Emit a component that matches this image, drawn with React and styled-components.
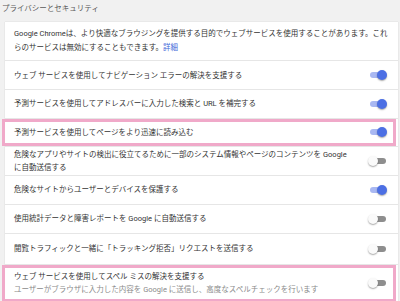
import React from 'react';
import styled, { createGlobalStyle } from 'styled-components';

const GlobalStyle = createGlobalStyle`
  html, body {
    margin: 0;
    padding: 0;
    background: #f1f1f1;
    font-family: Roboto, "Noto Sans CJK JP", sans-serif;
    overflow: hidden;
  }
`;

const Page = styled.div`
  width: 400px;
  height: 301px;
  overflow: hidden;
`;

const Heading = styled.h2`
  margin: 0;
  padding: 3px 2px 0;
  height: 19px;
  font-size: 7.5px;
  line-height: 11px;
  font-weight: 400;
  color: #5a5a5a;
`;

const Card = styled.div`
  margin: 0 2px 0 5px;
  background: #fff;
  box-shadow: 0 0 1px rgba(0, 0, 0, 0.2);
`;

const Intro = styled.p`
  margin: 0;
  padding: 5px 10px 5px 9px;
  font-size: 7.5px;
  line-height: 14px;
  color: #333;
  border-bottom: 1px solid #e6e6e6;
`;

const Link = styled.a`
  color: #3f67d8;
  text-decoration: none;
`;

const Row = styled.div`
  position: relative;
  display: flex;
  align-items: center;
  justify-content: space-between;
  min-height: ${(p) => p.$height || 28.5}px;
  padding: 0 11px 0 9px;
  box-sizing: border-box;
  border-bottom: 1px solid #e6e6e6;

  ${(p) =>
    p.$highlight &&
    `
    &::after {
      content: '';
      position: absolute;
      top: 0;
      bottom: 0;
      left: -3px;
      right: 2px;
      border: 3px solid #f0a9c9;
      pointer-events: none;
    }
  `}
`;

const Label = styled.div`
  max-width: 345px;
  font-size: 7.5px;
  line-height: 13px;
  color: #333;
  word-break: keep-all;
`;

const Sub = styled.div`
  color: #8a8a8a;
`;

const Switch = styled.div`
  position: relative;
  flex: none;
  width: 18px;
  height: 10px;
`;

const Track = styled.div`
  position: absolute;
  left: 1px;
  right: 1px;
  top: 2px;
  height: 6px;
  border-radius: 3px;
  background: ${(p) => (p.$on ? '#a9b8f2' : '#8e8e8e')};
`;

const Knob = styled.div`
  position: absolute;
  top: 0;
  left: ${(p) => (p.$on ? '8px' : '-1px')};
  width: 10px;
  height: 10px;
  border-radius: 50%;
  background: ${(p) => (p.$on ? '#4c6fe4' : '#fafafa')};
  box-shadow: 0 1px 1.5px rgba(0, 0, 0, 0.35);
`;

function Toggle({ on }) {
  return (
    <Switch>
      <Track $on={on} />
      <Knob $on={on} />
    </Switch>
  );
}

const rows = [
  { text: 'ウェブ サービスを使用してナビゲーション エラーの解決を支援する', on: true, height: 29 },
  { text: '予測サービスを使用してアドレスバーに入力した検索と URL を補完する', on: true },
  { text: '予測サービスを使用してページをより迅速に読み込む', on: true, highlight: true },
  {
    text: '危険なアプリやサイトの検出に役立てるために一部のシステム情報やページのコンテンツを Google に自動送信する',
    on: false,
    height: 29,
  },
  { text: '危険なサイトからユーザーとデバイスを保護する', on: true },
  { text: '使用統計データと障害レポートを Google に自動送信する', on: false, height: 29 },
  { text: '閲覧トラフィックと一緒に「トラッキング拒否」リクエストを送信する', on: false, height: 31 },
  {
    text: 'ウェブ サービスを使用してスペル ミスの解決を支援する',
    sub: 'ユーザーがブラウザに入力した内容を Google に送信し、高度なスペルチェックを行います',
    on: false,
    highlight: true,
    height: 38,
  },
];

export default function App() {
  return (
    <Page>
      <GlobalStyle />
      <Heading>プライバシーとセキュリティ</Heading>
      <Card>
        <Intro>
          Google Chromeは、より快適なブラウジングを提供する目的でウェブサービスを使用することがあります。これらのサービスは無効にすることもできます。<Link href="#">詳細</Link>
        </Intro>
        {rows.map((r, i) => (
          <Row key={i} $highlight={r.highlight} $height={r.height}>
            <Label>
              {r.text}
              {r.sub && <Sub>{r.sub}</Sub>}
            </Label>
            <Toggle on={r.on} />
          </Row>
        ))}
      </Card>
    </Page>
  );
}
